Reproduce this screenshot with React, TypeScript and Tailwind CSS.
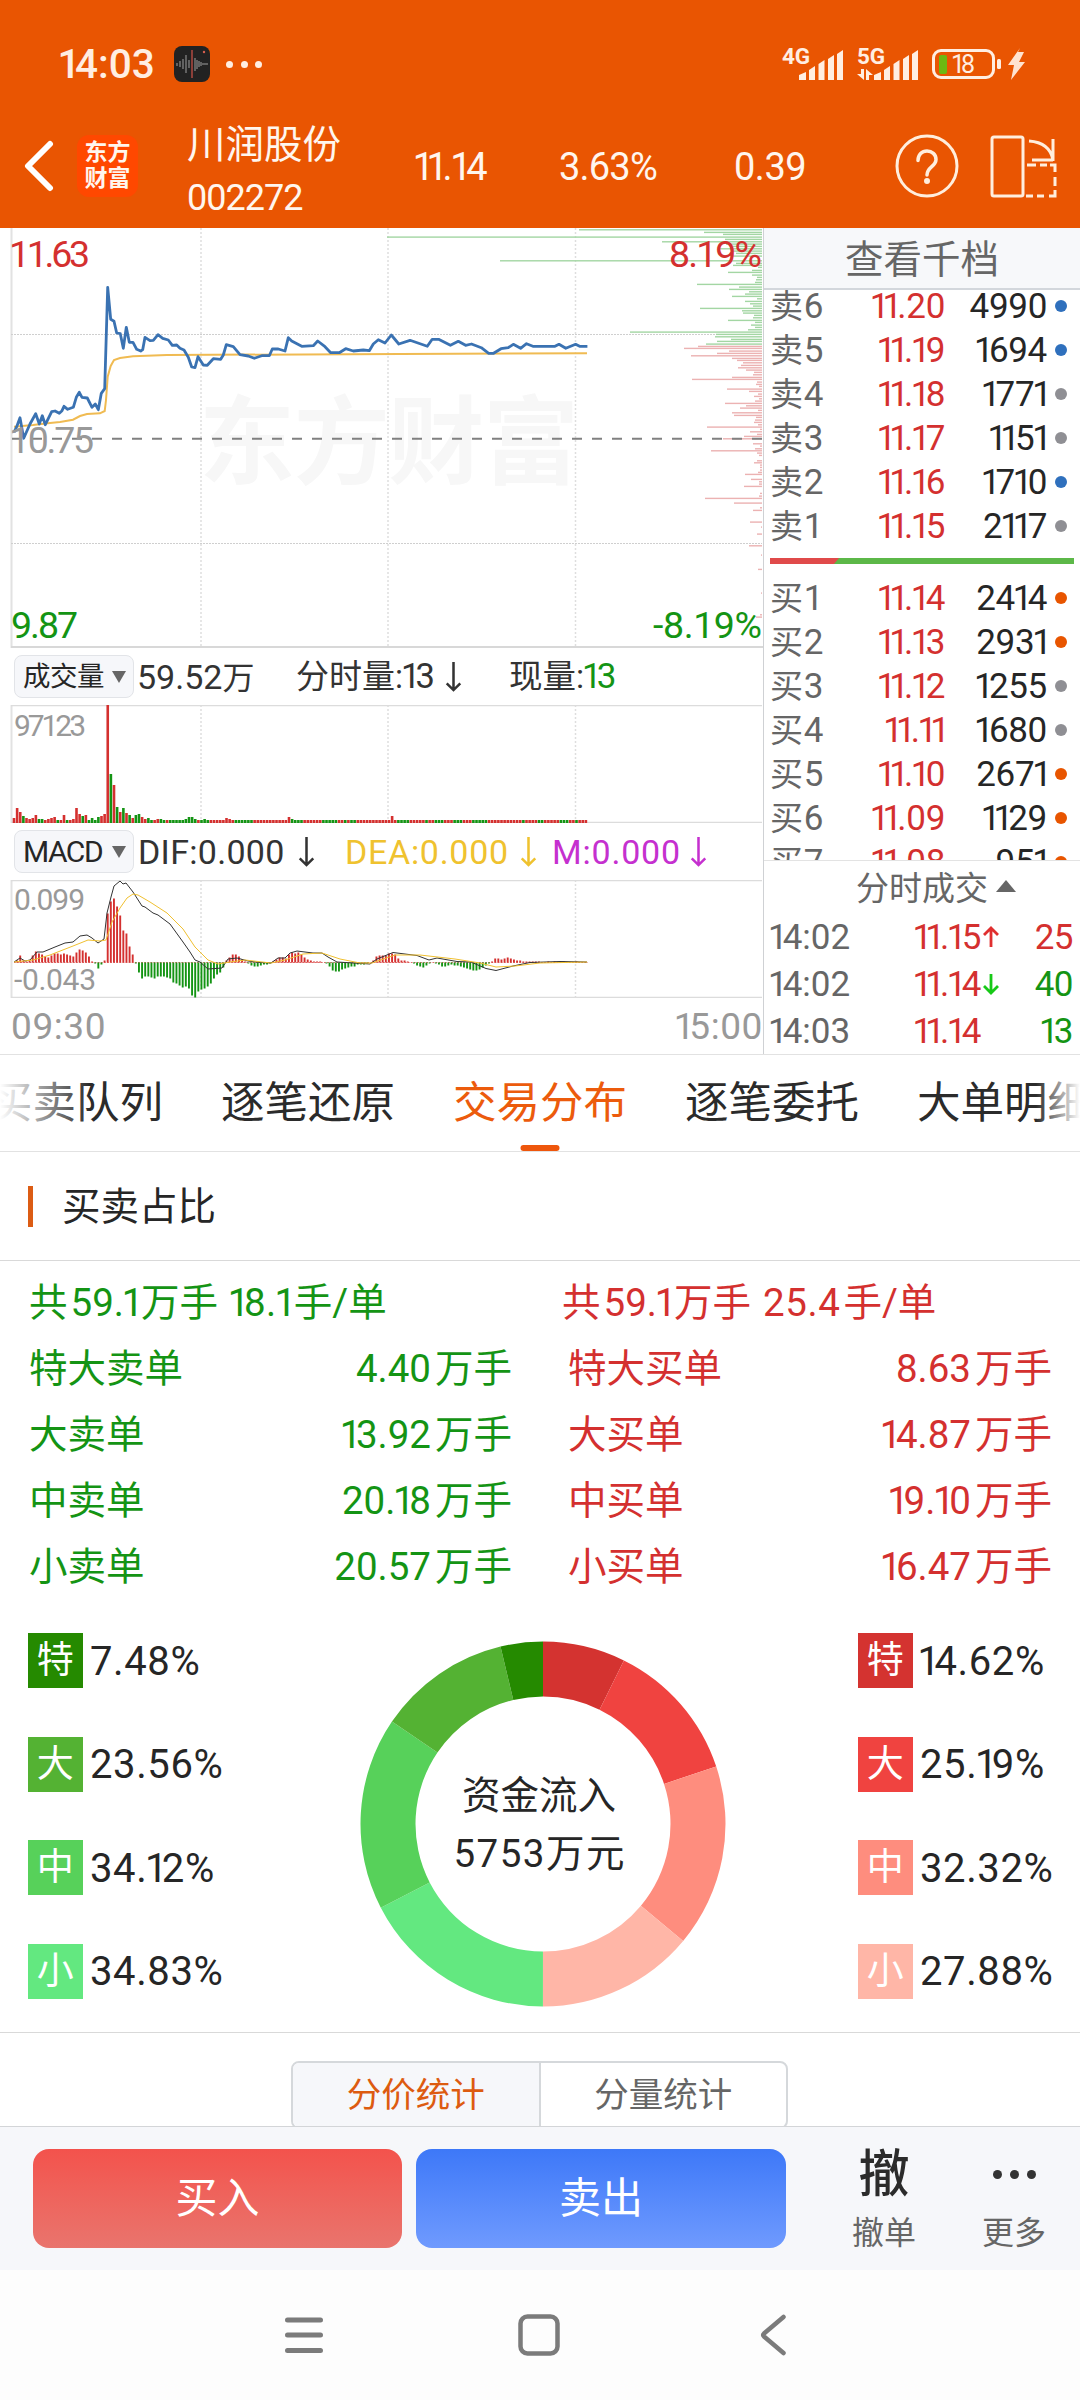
import React from 'react';

const RED = '#d4302f';
const GREEN = '#149414';

// price line, [x, y] pairs in chart pixels
const pricePoints = `14,204.3 16.7,198.7 20,189.7 23.7,210.3 30,196 35.7,185.7 39.3,196 42.3,187.7 45.3,196.7 51.7,183.7 55,183 59.3,185.3 62,182.7
64,178.3 67.7,181.3 73.3,179.3 76.3,169.3 79.3,164.3 82,169.3 87.3,170 92,179.3 95.3,176 98.3,181.7 101.3,165.3 104.7,160.7 107.7,59.3 110.7,91.3
114,93.3 116.7,105 120.3,105.7 123.3,120.3 126.3,99.3 129.3,114.3 133,114.3 136.7,121.3 140.7,123 142.7,121.7 145,109.3 150,112.7 153.3,112.3
158,106.7 162.7,110.3 168.3,112 172.3,117.3 176.7,117 180,120.3 184,122 188.3,129.3 191.7,139 195,139.7 198,128.7 203.3,137 207.3,137.3
213.3,130.7 220.7,131.3 223.3,127 226.3,116.7 233.3,118.7 240,126.7 248.3,128 254.3,130.3 261.7,127.7 269.3,127.7 272.3,121 278.3,121 285,123
288.3,109.7 291.7,113 301.7,118.3 313.3,117.7 317.7,113 325,118.7 330.7,124.7 339.3,124.7 345.7,120.7 353.3,123 363.3,122 369.3,122.7 373.3,116
378.3,111.7 385,115 391.3,107 398.8,116 410,112.3 427.3,118.3 432.2,111.3 438.6,111.3 450.4,117.3 458.3,113.3 465.6,117.3 471.5,116 481.3,119.7
488.7,125.3 493.6,125.3 501,120.7 508.3,119.7 513.3,116.3 520.6,120.3 526.5,115.7 532.9,118.3 555,118.3 559,116.3 565.8,120.3 575.6,116.3
579.6,118.3 587.4,118.3`;

const avgPoints =
  '14,198.7 33,197 50,195 60,194 73,191.7 80,188 87,186 100,185.3 104.7,183 106,172 107.7,148.7 110.7,138 114,132 120,130 133,128.3 167,127 400,126 587,125.3';

// order distribution on the right edge: [y, length]
const sellDepth = [
  [1.7, 183], [4.3, 58], [6.3, 39], [9, 375], [11.3, 37], [13.7, 100], [16, 36], [18.3, 29], [20.7, 42], [23, 29], [25.3, 26], [28, 30], [32.7, 262],
  [35.3, 26], [37.3, 29], [39.3, 4], [42.3, 10], [44.3, 34], [47, 10], [49.3, 5], [51.7, 6], [54.3, 7], [56.3, 65], [59, 23], [61.3, 33], [63.7, 13],
  [66, 17], [68.3, 30], [70.7, 5], [73.3, 17], [75.7, 12], [78, 9], [80.3, 62], [82.7, 20], [85, 19], [87.3, 8], [89.7, 9], [92.3, 34], [94.3, 7],
  [97, 11], [99.3, 7], [101.7, 14], [104, 132], [106.3, 46], [108.7, 47], [111.3, 31], [113.3, 45], [116, 56],
];
const buyDepth = [
  [118.3, 64], [120.3, 78], [123, 33], [125.3, 45], [127.7, 71], [130.3, 30], [132.3, 25], [134.7, 19], [137.3, 21], [139.7, 24], [142, 16],
  [144.3, 8], [146.7, 9], [149.3, 30], [151.3, 70], [154, 5], [156.3, 6], [158.3, 3], [161, 35], [163.3, 13], [166, 4], [168.3, 8], [170.7, 3],
  [173, 7], [175.3, 37], [177.7, 16], [180, 22], [182.3, 4], [184.7, 30], [187.3, 28], [189.3, 6], [192, 7], [194.3, 8], [196.7, 4], [199, 55],
  [201.3, 2], [203.7, 12], [206.3, 5], [208.3, 18], [210.7, 39], [215.7, 9], [218, 2], [220.7, 7], [222.7, 51], [225, 5], [227.3, 3], [232.7, 5],
  [234.7, 8], [237, 2], [239.3, 2], [242, 2], [244.3, 4], [246.3, 17], [251.3, 11], [253.7, 3], [256, 3], [258.3, 18], [265.3, 2], [268, 3],
  [270.3, 57], [275, 28], [279.7, 2], [282.3, 9], [294, 12], [299, 1], [306, 5], [317.7, 13], [327, 1], [341.3, 4], [365, 1], [386.7, 2], [389, 6],
];

const volumeHead = [
  5, 15, 11, 7, 5, 4, 5, 8, 4, 4, 3, 4, 5, 6, 3, 3, 8, 3, 3, 4, 15, 9, 7, 8, 3, 5, 3, 6, 7, 9, 118, 49, 38, 16, 11, 15, 10, 8, 5, 8, 9, 6, 4, 5, 3, 3, 4, 4,
];
const volumeSpikes: Record<number, number> = { 55: 4, 56: 6, 57: 6, 58: 4, 61: 4, 68: 5, 69: 4, 88: 6, 89: 4, 121: 7 };
const volumeColors =
  'rrrgrrrrggrrrrgrrgrrrrgrggggrrrgrgrgrgrggrrggrrggrgggggggggrgggrrrrrrrrggggggrrrrrrrrrrrrggggrrrrrrgggggrrgrggrrrrrrrrrrrrrggggrrrrrgrrgggrrrgggrrrgggggrrrrrrrrrrrgrrrrggrrrrrgggrrgrrr';

const macdBars = [
  0, 2, 7, 2, 1, 2, 7, 11, 9, 8, 6, 5, 7, 9, 9, 8, 9, 8, 7, 6, 10, 13, 12, 10, 6, 1, -1, -6, -2, 2, 49, 61, 64, 56, 47, 32, 29, 16, 8, -1, -10, -16, -14,
  -14, -15, -16, -14, -14, -14, -15, -16, -20, -21, -23, -25, -24, -26, -33, -35, -29, -27, -26, -24, -21, -16, -12, -10, -5, 2, 5, 8, 8, 6, 3, 1, -1, -3,
  -4, -4, -3, -2, -2, -1, 1, 3, 5, 5, 4, 8, 10, 9, 10, 8, 5, 3, 2, 1, 1, 1, 0, -1, -4, -8, -9, -9, -7, -6, -5, -4, -4, -2, -2, -2, -1, 0, 2, 6, 7, 7, 7,
  9, 9, 8, 4, 2, 2, 1, 0, -1, -3, -4, -5, -3, -1, 0, -1, -2, -4, -4, -3, -2, -3, -3, -4, -5, -6, -7, -8, -8, -7, -5, -3, -1, 1, 4, 4, 3, 4, 5, 4, 3, 2, 2,
  1, 1, 1, 1, 1, 1, 0, 0, 1, 0, 1, 0, 0, 1, 0, 0, 0, 1, 0, 0, 0,
];
const difPoints =
  '14,82 20,78 25,81 30,80 37,72 43,72 55,67 65,63 73,62 80,56 87,55 92,58 98,63 104,59 107,33 111,17 114,6 120,1 123,4 126,3 133,12 142,26 145,27 153,33 158,35 170,44 183,62 190,72 195,80 200,82 208,89 222,88 228,79 237,78 248,81 260,82.5 271,83 278,78 285,78 290,73 297,71 313,73 322,73 328,77 337,82 353,83 370,84 377,79 393,72.5 417,75.5 429,80 437,78 457,81.5 471,82 486,88.5 496,90.5 513,86 530,82.5 560,81.5 587,82';
const deaPoints =
  '14,82 33,80 50,75 73,66 88,60 100,61 106,60 112,42 120,28 127,18 133,14 138,15 150,22 167,33 183,49 195,67 208,80 218,84 230,82 245,80 271,83 285,80 303,74 322,73 340,79 360,83 372,83 395,75 420,75 455,79 480,83 496,87 515,86 540,83 587,82';

const BLUE_DOT = 'bg-[#2f70bd]';
const GRAY_DOT = 'bg-[#8f8f94]';
const ORANGE_DOT = 'bg-[#e85500]';

const sells = [
  { label: '卖6', price: '11.20', vol: '4990', dot: BLUE_DOT },
  { label: '卖5', price: '11.19', vol: '1694', dot: BLUE_DOT },
  { label: '卖4', price: '11.18', vol: '1771', dot: GRAY_DOT },
  { label: '卖3', price: '11.17', vol: '1151', dot: GRAY_DOT },
  { label: '卖2', price: '11.16', vol: '1710', dot: BLUE_DOT },
  { label: '卖1', price: '11.15', vol: '2117', dot: GRAY_DOT },
];
const buys = [
  { label: '买1', price: '11.14', vol: '2414', dot: ORANGE_DOT },
  { label: '买2', price: '11.13', vol: '2931', dot: ORANGE_DOT },
  { label: '买3', price: '11.12', vol: '1255', dot: GRAY_DOT },
  { label: '买4', price: '11.11', vol: '1680', dot: GRAY_DOT },
  { label: '买5', price: '11.10', vol: '2671', dot: ORANGE_DOT },
  { label: '买6', price: '11.09', vol: '1129', dot: ORANGE_DOT },
  { label: '买7', price: '11.08', vol: '951', dot: ORANGE_DOT },
];
const trades = [
  { time: '14:02', price: '11.15', dir: 'up', vol: '25', color: 'text-[#d4302f]' },
  { time: '14:02', price: '11.14', dir: 'down', vol: '40', color: 'text-[#149414]' },
  { time: '14:03', price: '11.14', dir: '', vol: '13', color: 'text-[#149414]' },
];

const sellStats = [
  ['特大卖单', '4.40', '万手'],
  ['大卖单', '13.92', '万手'],
  ['中卖单', '20.18', '万手'],
  ['小卖单', '20.57', '万手'],
];
const buyStats = [
  ['特大买单', '8.63', '万手'],
  ['大买单', '14.87', '万手'],
  ['中买单', '19.10', '万手'],
  ['小买单', '16.47', '万手'],
];

const sellShare = [
  { name: '特', value: 7.48, text: '7.48%', bg: 'bg-[#258a00]', fill: '#258a00' },
  { name: '大', value: 23.56, text: '23.56%', bg: 'bg-[#54b233]', fill: '#54b233' },
  { name: '中', value: 34.12, text: '34.12%', bg: 'bg-[#57d15a]', fill: '#57d15a' },
  { name: '小', value: 34.83, text: '34.83%', bg: 'bg-[#63e880]', fill: '#63e880' },
];
const buyShare = [
  { name: '特', value: 14.62, text: '14.62%', bg: 'bg-[#d43330]', fill: '#d43330' },
  { name: '大', value: 25.19, text: '25.19%', bg: 'bg-[#f04340]', fill: '#f04340' },
  { name: '中', value: 32.32, text: '32.32%', bg: 'bg-[#fe8d7e]', fill: '#fe8d7e' },
  { name: '小', value: 27.88, text: '27.88%', bg: 'bg-[#ffb6a7]', fill: '#ffb6a7' },
];

// "1" is set tighter than the other digits
const Num: React.FC<{ children: string }> = ({ children }) => (
  <>
    {children.split(/(1)/).filter(Boolean).map((part, i) =>
      part === '1' ? (
        <span key={i} className="-ml-[0.06em] tracking-[-0.14em]">1</span>
      ) : (
        part
      )
    )}
  </>
);

const Arrow: React.FC<{ className: string; up?: boolean }> = ({ className, up }) => (
  <svg viewBox="0 0 16 32" className={className} fill="none" stroke="currentColor" strokeWidth="2.6">
    {up ? <path d="M8 31V2M1 9l7-7 7 7" /> : <path d="M8 1v29M1 23l7 7 7-7" />}
  </svg>
);

const Signal: React.FC<{ label: string; data?: boolean }> = ({ label, data }) => (
  <svg viewBox="0 0 62 36" className="w-[62px] h-9 overflow-visible" fill="#ffeee2">
    <text x="0" y="18" fontSize="22.5" fontWeight="700" fontFamily="Roboto, sans-serif" textLength="28">{label}</text>
    <path d="M17 29l7-3v8h-7zM27 24l6-4v14h-6zM36.500 18l6-4v20h-6zM46 13l6-4v25h-6zM55 8l6-4v30h-6z" />
    {data && <path d="M4 23h3v11l-7-6h4zM9 34V23l7 6h-4v5z" />}
  </svg>
);

const StatusBar = () => (
  <div className="h-28 pt-4 pl-[60px] pr-[51px] flex items-center text-[#ffeee2]">
    <span className="text-[40.500px] font-medium leading-none w-[114px] whitespace-nowrap"><Num>14:03</Num></span>
    <svg viewBox="0 0 36 36" className="w-9 h-9">
      <rect width="36" height="36" rx="8" fill="#222" />
      <path d="M3 17v3M6 15v6M9 13v10M12 9v18M15 14v8M21 12v13M23 14v9M25 15v6M27 16v4M29 17v2M31 17v2M33 17v2" stroke="#8b8b8b" strokeWidth="1.200" />
      <path d="M18 4v28" stroke="#b04a42" strokeWidth="1.500" />
      <circle cx="30" cy="6" r="1.200" fill="#d9604f" />
    </svg>
    <div className="flex gap-[7.500px] ml-4">
      <i className="w-[7px] h-[7px] rounded-full bg-[#ffeee2]" />
      <i className="w-[7px] h-[7px] rounded-full bg-[#ffeee2]" />
      <i className="w-[7px] h-[7px] rounded-full bg-[#ffeee2]" />
    </div>
    <div className="ml-auto flex items-center">
      <Signal label="4G" />
      <div className="w-[13px]" />
      <Signal label="5G" data />
      <svg viewBox="0 0 98 32" className="w-[98px] h-8 ml-3">
        <rect x="2.500" y="2.500" width="60" height="27" rx="7.500" fill="none" stroke="#ffeee2" strokeWidth="3" />
        <rect x="8" y="7" width="8" height="19" rx="2" fill="#6cb812" />
        <text x="20" y="25" fontSize="25" fill="#ffeee2" fontFamily="Roboto, sans-serif" textLength="24">18</text>
        <rect x="66" y="11" width="4" height="10" rx="1.500" fill="#ffeee2" />
        <path d="M89 0L77 17h6l-3 15 14-18h-6l5-10h-6z" fill="#ffe3d0" />
      </svg>
    </div>
  </div>
);

const Header = () => (
  <div className="bg-[#e95502] h-[228px] shrink-0 text-[#fff6ee]">
    <StatusBar />
    <div className="h-[108px] flex items-center pl-6 pr-[22px]">
      <svg viewBox="0 0 30 52" className="w-[30px] h-[52px] shrink-0" fill="none" stroke="#fff" strokeWidth="6" strokeLinecap="round" strokeLinejoin="round">
        <path d="M26 4L4 26l22 22" />
      </svg>
      <div className="ml-[23px] w-[61px] h-[62px] shrink-0 rounded-xl bg-[#ff4800] flex flex-col items-center justify-center text-[23px] leading-[26px] font-bold">
        <span>东方</span>
        <span>财富</span>
      </div>
      <div className="ml-[49px] w-[228px] pt-3 shrink-0">
        <div className="text-[38.500px] leading-[52px]">川润股份</div>
        <div className="text-[36px] leading-[54px] tracking-[-1px]">002272</div>
      </div>
      <div className="w-[144px] pt-0.5 text-[38px] tracking-[-0.200px]"><Num>11.14</Num></div>
      <div className="w-[175px] pt-0.5 text-[38px] tracking-[-0.800px]">3.63%</div>
      <div className="w-[161px] pt-0.5 text-[38px] tracking-[-0.500px]">0.39</div>
      <svg viewBox="0 0 64 64" className="w-16 h-16 shrink-0" fill="none" stroke="#ffeedd" strokeWidth="3">
        <circle cx="32" cy="32" r="30" />
        <path d="M23 26.500c0-6 4-9.500 9-9.500s9 3.500 9 8.500c0 7-9 7.500-9 15.500" strokeWidth="3.500" strokeLinecap="round" />
        <circle cx="32" cy="47" r="1.500" fill="#ffeedd" />
      </svg>
      <svg viewBox="0 0 68 64" className="w-[68px] h-16 ml-[31px] shrink-0" fill="none" stroke="#ffeedd" strokeWidth="3">
        <rect x="2" y="3" width="31" height="59" rx="2" />
        <path d="M39 7c14 1 22 8 24 19M63 5v22M42 26h21" />
        <path d="M37 31h9M50 31h7M60 31h5v7M65 43v9M65 56v6h-6M54 62h-7M43 62h-7" />
      </svg>
    </div>
  </div>
);

const Grid: React.FC<{ h: number }> = ({ h }) => (
  <g stroke="#dedede" strokeWidth="1.500">
    <path d={`M201 0V${h}M388 0V${h}M575.500 0V${h}`} strokeDasharray="2 2" />
    <path d={`M11.500 0V${h}`} strokeWidth="2" stroke="#e2e2e2" />
  </g>
);

const PriceChart = () => (
  <svg viewBox="0 0 763 420" className="block w-[763px] h-[420px] font-['Roboto']">
    <text x="199" y="248" fontSize="96" fontWeight="700" fill="#f7f7f7" fontFamily="Noto Sans CJK SC, sans-serif" textLength="380">东方财富</text>
    <Grid h={420} />
    <path d="M11 106.500H762M11 315.500H762" stroke="#cfcfcf" strokeDasharray="2 1" />
    {sellDepth.map(([y, w], i) => (
      <rect key={i} x={762 - w} y={y - 0.6} width={w} height="1.400" fill="#a3d6a3" />
    ))}
    {buyDepth.map(([y, w], i) => (
      <rect key={i} x={762 - w} y={y - 0.6} width={w} height="1.400" fill="#ecb2b2" />
    ))}
    <polyline points={avgPoints} fill="none" stroke="#f0bb52" strokeWidth="2" />
    <polyline points={pricePoints} fill="none" stroke="#3a72b2" strokeWidth="2.800" strokeLinejoin="round" />
    <path d="M12 210.700H762" stroke="#808080" strokeWidth="2" strokeDasharray="10 10" />
    <path d="M11 419H763" stroke="#d8d8d8" strokeWidth="2" />
    <g fontSize="37.500">
      <text x="9" y="39" fill={RED} textLength="81">11.63</text>
      <text x="762" y="39" fill={RED} textAnchor="end" textLength="93">8.19%</text>
      <text x="9" y="225" fill="#999" textLength="85">10.75</text>
      <text x="11" y="410" fill={GREEN} textLength="67">9.87</text>
      <text x="762" y="410" fill={GREEN} textAnchor="end" textLength="109">-8.19%</text>
    </g>
  </svg>
);

const VolumeChart = () => (
  <svg viewBox="0 0 763 118" className="block w-[763px] h-[118px] font-['Roboto']">
    <Grid h={118} />
    <path d="M11 0.500H762M11 117.500H762" stroke="#dcdcdc" strokeWidth="1.500" />
    {Array.from({ length: 184 }, (_, i) => {
      const v = volumeHead[i] ?? volumeSpikes[i] ?? 3;
      return <rect key={i} x={12.7 + i * 3.125} y={118 - v} width="2.600" height={v} fill={volumeColors[i] === 'g' ? GREEN : RED} />;
    })}
    <text x="14" y="31" fontSize="30" fill="#999" textLength="72">97123</text>
  </svg>
);

const MacdChart = () => (
  <svg viewBox="0 0 763 118" className="block w-[763px] h-[118px] font-['Roboto']">
    <Grid h={118} />
    <path d="M11 0.500H762M11 117.500H762" stroke="#dcdcdc" strokeWidth="1.500" />
    <path d="M14 82.500H588" stroke={RED} strokeOpacity="0.700" strokeDasharray="1.800 1.300" />
    {macdBars.map((v, i) => (
      <rect key={i} x={13 + i * 3.125} y={v > 0 ? 82.5 - v : 82.5} width="1.900" height={Math.abs(v)} fill={v > 0 ? RED : GREEN} />
    ))}
    <polyline points={difPoints} fill="none" stroke="#333" strokeWidth="1" />
    <polyline points={deaPoints} fill="none" stroke="#f0c030" strokeWidth="1" />
    <g fontSize="30" fill="#999">
      <text x="14" y="30" textLength="71">0.099</text>
      <text x="14" y="110" textLength="82">-0.043</text>
    </g>
  </svg>
);

const IndicatorButton: React.FC<{ children: React.ReactNode }> = ({ children }) => (
  <div className="w-[120px] h-[43px] shrink-0 rounded-lg border border-[#e2e4e8] bg-[#f6f7fa] flex items-center justify-between pl-2 pr-[7px] text-[#262626]">
    {children}
    <svg viewBox="0 0 14 12" className="w-[14px] h-3 shrink-0" fill="#666">
      <path d="M0 0h14L7 12z" />
    </svg>
  </div>
);

const ChartColumn = () => (
  <div className="w-[764px] shrink-0 border-r border-[#cfd1d4]">
    <PriceChart />
    <div className="h-[57px] flex items-center pl-[14px] text-[32px] text-[#333] whitespace-nowrap">
      <IndicatorButton><span className="text-[27.500px] tracking-[-0.500px]">成交量</span></IndicatorButton>
      <div className="w-[162px] pl-[3px]"><span className="text-[34px]">59.52</span>万</div>
      <div className="w-[213px] flex items-center text-[33px]">
        分时量:<span className="text-[34.500px]"><Num>13</Num></span>
        <Arrow className="w-[17px] h-[31px] ml-[10px]" />
      </div>
      <div className="text-[33.500px]">现量:<span className="text-[35px] text-[#149414]"><Num>13</Num></span></div>
    </div>
    <VolumeChart />
    <div className="h-[57px] flex items-center pl-[14px] text-[34px] text-[#333] whitespace-nowrap">
      <IndicatorButton><span className="text-[30px] tracking-[-1.500px]">MACD</span></IndicatorButton>
      <div className="w-[209px] pl-1 flex items-center tracking-[0.300px]">DIF:0.000<Arrow className="w-[17px] h-[31px] ml-[13px]" /></div>
      <div className="w-[209px] pl-0.5 flex items-center tracking-[0.700px] text-[#efc22f]">DEA:0.000<Arrow className="w-[17px] h-[31px] ml-[11px]" /></div>
      <div className="flex items-center tracking-[0.800px] text-[#c530cf]">M:0.000<Arrow className="w-[17px] h-[31px] ml-[9px]" /></div>
    </div>
    <MacdChart />
    <div className="h-[55px] flex items-center justify-between pt-0.5 pl-[11px] text-[37px] tracking-[0.600px] text-[#999]">
      <span>09:30</span>
      <span><Num>15:00</Num></span>
    </div>
  </div>
);

const QuoteRow: React.FC<{ q: { label: string; price: string; vol: string; dot: string } }> = ({ q }) => (
  <div className="h-11 flex items-center pl-[6px] pr-[13px] text-[35px] leading-[44px] tracking-[-0.300px]">
    <span className="w-[60px] pt-0.5 text-[#666] whitespace-nowrap"><span className="text-[33px] mr-px">{q.label[0]}</span>{q.label[1]}</span>
    <span className="w-[115px] pt-0.5 text-right text-[#d4302f]"><Num>{q.price}</Num></span>
    <span className="flex-1 pt-0.5 text-right text-[#262626]"><Num>{q.vol}</Num></span>
    <i className={`w-3 h-3 rounded-full ml-2 ${q.dot}`} />
  </div>
);

const OrderBook = () => (
  <div className="flex-1 flex flex-col">
    <div className="h-[62px] pt-1 bg-[#f7f8fa] border-b-2 border-[#d3d7dc] flex items-center justify-center text-[38.500px] text-[#666] shrink-0">查看千档</div>
    <div className="h-[571px] overflow-hidden border-b border-[#e3e3e3] shrink-0">
      <div className="-mt-[6px]">
        {sells.map((q) => <QuoteRow key={q.label} q={q} />)}
        <svg viewBox="0 0 304 6" className="block w-[304px] h-[6px] mt-[10px] mb-3 ml-[6px]">
          <rect width="304" height="6" fill="#5cb848" />
          <path d="M0 0h69l-5 6H0z" fill="#e04a4a" />
        </svg>
        {buys.map((q) => <QuoteRow key={q.label} q={q} />)}
      </div>
    </div>
    <div className="h-[51px] shrink-0 flex items-center justify-center pt-[3px] pl-7 text-[33px] text-[#666]">
      分时成交
      <svg viewBox="0 0 20 12" className="w-5 h-3 ml-[8px] -mt-1" fill="#666">
        <path d="M10 0l10 12H0z" />
      </svg>
    </div>
    {trades.map((t, i) => (
      <div key={i} className="h-[47px] pt-[3px] flex items-center pl-[6px] pr-[7px] text-[35px]">
        <span className="w-[100px] text-[#666]"><Num>{t.time}</Num></span>
        <span className="w-[111px] text-right tracking-[-0.300px] text-[#d4302f]"><Num>{t.price}</Num></span>
        <span className="w-[20px] flex justify-center">
          {t.dir === 'up' && (
            <svg viewBox="0 0 16 22" className="w-4 h-[22px]" fill="none" stroke="#e02f2f" strokeWidth="2.800"><path d="M8 21V2M1 9l7-7 7 7" /></svg>
          )}
          {t.dir === 'down' && (
            <svg viewBox="0 0 16 22" className="w-4 h-[22px]" fill="none" stroke="#17c917" strokeWidth="2.800"><path d="M8 1v19M1 13l7 7 7-7" /></svg>
          )}
        </span>
        <span className={`flex-1 text-right tracking-[-0.500px] ${t.color}`}><Num>{t.vol}</Num></span>
      </div>
    ))}
  </div>
);

const tabs = ['买卖队列', '逐笔还原', '交易分布', '逐笔委托', '大单明细'];

const Tabs = () => (
  <div className="relative h-[98px] shrink-0 border-y border-[#e2e2e2] overflow-hidden flex gap-[58px] text-[43.500px] text-[#2b2b2b] whitespace-nowrap">
    {tabs.map((t, i) => (
      <div key={t} className={`relative h-full pt-0.5 flex items-center justify-center shrink-0 w-[174px] ${i === 0 ? '-ml-[11px]' : ''} ${i === 2 ? 'text-[#ec5b0c]' : ''}`}>
        {t}
        {i === 2 && <i className="absolute bottom-0 left-1/2 -translate-x-1/2 w-[39px] h-[6px] rounded-full bg-[#ee560c]" />}
      </div>
    ))}
    <div className="absolute left-0 inset-y-0 w-[90px] bg-gradient-to-r from-white to-white/0" />
    <div className="absolute right-0 inset-y-0 w-[44px] bg-gradient-to-l from-white to-white/0" />
  </div>
);

const Stats: React.FC<{ avg: string; rows: string[][]; className: string; indent: string }> = ({ avg, rows, className, indent }) => (
  <div className={className}>
    <div className="h-[66px] flex items-center">
      <span>共</span>
      <span className="ml-[3px] mr-[3px]"><Num>59.1</Num></span>
      <span>万手</span>
      <span className="ml-3 mr-[3px] tracking-[0.600px]"><Num>{avg}</Num></span>
      <span>手/单</span>
    </div>
    {rows.map(([label, value, unit]) => (
      <div key={label} className={`h-[66px] flex items-center ${indent}`}>
        <span className="flex-1">{label}</span>
        <span className="mr-1"><Num>{value}</Num></span>
        <span>{unit}</span>
      </div>
    ))}
  </div>
);

const slicePath = (from: number, to: number) => {
  const p = (deg: number, r: number) => {
    const a = (deg * Math.PI) / 180;
    return `${(183 + r * Math.sin(a)).toFixed(2)} ${(183 - r * Math.cos(a)).toFixed(2)}`;
  };
  return `M${p(from, 182.5)}A182.500 182.500 0 0 1 ${p(to, 182.5)}L${p(to, 127.5)}A127.500 127.500 0 0 0 ${p(from, 127.5)}Z`;
};

const Donut = () => {
  const slices = [...buyShare, ...[...sellShare].reverse()];
  let angle = 0;
  return (
    <svg viewBox="0 0 366 366" className="w-[366px] h-[366px]">
      {slices.map((s) => {
        const from = angle;
        angle += s.value * 1.8;
        return <path key={s.fill} d={slicePath(from, angle)} fill={s.fill} />;
      })}
      <g fontSize="38.500" fill="#262626" textAnchor="middle" fontFamily="Roboto, Noto Sans CJK SC, sans-serif">
        <text x="179" y="168">资金流入</text>
        <text x="179" y="226" textLength="171">5753万元</text>
      </g>
    </svg>
  );
};

const Legend: React.FC<{ items: typeof sellShare }> = ({ items }) => (
  <div className="w-[194px] flex flex-col gap-[48.500px]">
    {items.map((s) => (
      <div key={s.name} className="h-[55px] flex items-center text-[40px] tracking-[0.600px] text-[#262626] whitespace-nowrap">
        <span className={`w-[55px] h-[55px] shrink-0 leading-[55px] text-center text-white text-[37px] mr-[7px] ${s.bg}`}>{s.name}</span>
        <span className="pt-0.5"><Num>{s.text}</Num></span>
      </div>
    ))}
  </div>
);

const BottomBar = () => (
  <div className="h-[144px] shrink-0 bg-[#f6f7fa] border-t border-[#d3d5d8] flex items-center pl-[33px]">
    <div className="w-[369px] h-[99px] rounded-2xl bg-gradient-to-b from-[#f3524c] to-[#e9746d] text-white text-[42px] flex items-center justify-center">买入</div>
    <div className="w-[370px] h-[99px] ml-[14px] rounded-2xl bg-gradient-to-b from-[#3d78f8] to-[#6f9afe] text-white text-[42px] flex items-center justify-center">卖出</div>
    <div className="ml-[53px] w-[90px] pt-[10px] flex flex-col items-center">
      <span className="text-[51px] leading-[58px] font-medium text-[#2b2b2b]">撤</span>
      <span className="text-[32px] leading-[58px] text-[#666]">撤单</span>
    </div>
    <div className="ml-10 w-[90px] pt-[10px] flex flex-col items-center">
      <div className="h-[58px] flex items-center gap-2">
        <i className="w-[9px] h-[9px] rounded-full bg-[#333]" />
        <i className="w-[9px] h-[9px] rounded-full bg-[#333]" />
        <i className="w-[9px] h-[9px] rounded-full bg-[#333]" />
      </div>
      <span className="text-[32px] leading-[58px] text-[#666]">更多</span>
    </div>
  </div>
);

const NavBar = () => (
  <div className="h-[130px] shrink-0 flex items-center pl-[285px] bg-[#fdfdfd]">
    <svg viewBox="0 0 38 38" className="w-[38px] h-[38px]" stroke="#7b7b7b" strokeWidth="5" strokeLinecap="round">
      <path d="M2.500 4h33M2.500 19h33M2.500 34.500h33" />
    </svg>
    <svg viewBox="0 0 42 42" className="w-[42px] h-[42px] ml-[195px]" fill="none" stroke="#7b7b7b" strokeWidth="4.500">
      <rect x="2.500" y="2.500" width="37" height="37" rx="7" />
    </svg>
    <svg viewBox="0 0 26 42" className="w-[26px] h-[42px] ml-[200px]" fill="none" stroke="#7b7b7b" strokeWidth="4.500" strokeLinecap="round" strokeLinejoin="round">
      <path d="M23.500 3L4 19.500q-1.500 1.500 0 3L23.500 39" />
    </svg>
  </div>
);

export default function App() {
  return (
    <div className="w-[1080px] h-[2400px] bg-white flex flex-col overflow-hidden font-['Roboto','Noto_Sans_CJK_SC',sans-serif] leading-none">
      <Header />
      <div className="h-[826px] shrink-0 flex">
        <ChartColumn />
        <OrderBook />
      </div>
      <Tabs />
      <div className="h-[109px] shrink-0 border-b border-[#d9d9d9] flex items-center pl-7 text-[38.500px] text-[#262626]">
        <i className="w-[5px] h-[41px] bg-[#dc5c14] mr-[29px]" />
        <span className="pt-0.5">买卖占比</span>
      </div>
      <div className="h-[337px] shrink-0 pt-[9px] flex pl-[29px] pr-[28px] justify-between text-[38.500px]">
        <div className="text-[#149414]"><Stats avg="18.1" rows={sellStats} className="w-[483px]" indent="" /></div>
        <div className="text-[#d4302f]"><Stats avg="25.4" rows={buyStats} className="w-[490px]" indent="pl-[6px]" /></div>
      </div>
      <div className="h-[435px] shrink-0 border-b border-[#d9d9d9] flex items-start justify-between pl-7 pr-7 pt-[35px]">
        <Legend items={sellShare} />
        <div className="pt-[8px] pl-[6px]"><Donut /></div>
        <Legend items={buyShare} />
      </div>
      <div className="h-[93px] shrink-0 pt-7 flex justify-center overflow-hidden">
        <div className="w-[497px] h-[68px] -ml-px flex border-2 border-[#d5d8db] rounded-lg overflow-hidden text-[34.500px]">
          <div className="flex-1 bg-[#f6f7fa] border-r-2 border-[#d5d8db] text-[#dd5b10] flex items-center justify-center">分价统计</div>
          <div className="flex-1 text-[#666] flex items-center justify-center">分量统计</div>
        </div>
      </div>
      <BottomBar />
      <NavBar />
    </div>
  );
}
